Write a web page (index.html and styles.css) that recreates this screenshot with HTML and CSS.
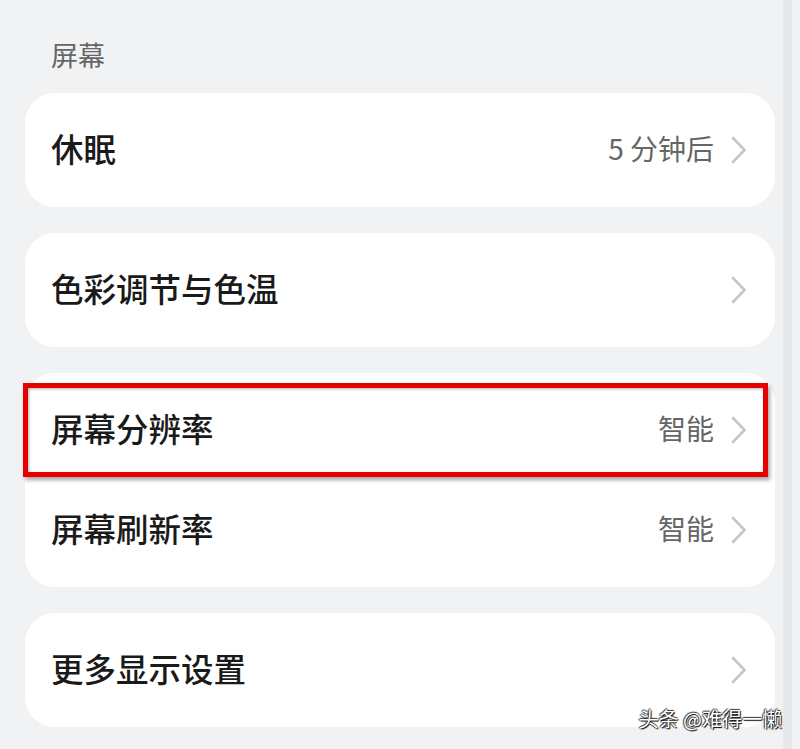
FILE: index.html
```html
<!DOCTYPE html>
<html lang="zh-CN">
<head>
  <meta charset="UTF-8" />
  <meta name="viewport" content="width=device-width, initial-scale=1.0"/>
  <title>显示</title>
  <link rel="stylesheet" href="styles.css">
</head>
<body>

  <div class="screen">
    <div class="section-title">屏幕</div>

    <div class="card">
      <div class="row">
        <span class="label">休眠</span>
        <span class="value">5 分钟后</span>
        <svg class="chevron" viewBox="0 0 16 28"><path d="M2 2 L13.5 14 L2 26" /></svg>
      </div>
    </div>

    <div class="card">
      <div class="row">
        <span class="label">色彩调节与色温</span>
        <svg class="chevron" viewBox="0 0 16 28"><path d="M2 2 L13.5 14 L2 26" /></svg>
      </div>
    </div>

    <div class="card card-group">
      <div class="row">
        <span class="label">屏幕分辨率</span>
        <span class="value">智能</span>
        <svg class="chevron" viewBox="0 0 16 28"><path d="M2 2 L13.5 14 L2 26" /></svg>
      </div>
      <div class="row">
        <span class="label">屏幕刷新率</span>
        <span class="value">智能</span>
        <svg class="chevron" viewBox="0 0 16 28"><path d="M2 2 L13.5 14 L2 26" /></svg>
      </div>
      <!-- highlight mark drawn over the first row -->
      <div class="highlight"></div>
    </div>

    <div class="card">
      <div class="row">
        <span class="label">更多显示设置</span>
        <svg class="chevron" viewBox="0 0 16 28"><path d="M2 2 L13.5 14 L2 26" /></svg>
      </div>
    </div>

    <div class="watermark">头条 @难得一懒</div>
  </div>

  <div class="track"></div>

</body>
</html>
```

FILE: styles.css
```css
body {
  margin: 0;
  background: #f1f2f4;
  font-family: 'Noto Sans CJK SC', 'Noto Sans', sans-serif;
  display: flex;
  height: 749px;
  overflow: hidden;
}
.screen {
  position: relative;
  width: 783px;
  padding-left: 25px;
  padding-right: 8px;
  box-sizing: border-box;
}
.track {
  width: 9px;
  background: #e7e8ea;
}
.section-title {
  font-size: 27px;
  line-height: 36px;
  color: #666;
  padding: 37px 0 20px 26px;
}
.card {
  position: relative;
  background: #fff;
  border-radius: 30px;
  padding: 7px 0;
  margin-bottom: 26px;
}
.row {
  display: flex;
  align-items: center;
  height: 100px;
  box-sizing: border-box;
  padding: 0 28px 5px 26px;
}
.label {
  flex: 1;
  font-size: 32.5px;
  font-weight: 500;
  color: #1a1a1a;
}
.value {
  font-size: 28px;
  color: #666;
  margin-right: 17px;
}
.chevron {
  width: 16px;
  height: 28px;
  margin-top: 4px;
}
.chevron path {
  fill: none;
  stroke: #c6c6c6;
  stroke-width: 2.6;
  stroke-linecap: round;
  stroke-linejoin: round;
}
.highlight {
  position: absolute;
  left: -2px;
  right: 7px;
  top: 10px;
  height: 94px;
  box-sizing: border-box;
  border: 5px solid #e60000;
  box-shadow: 2px 3px 4px rgba(0, 0, 0, 0.35), inset 1px 1px 3px rgba(0, 0, 0, 0.3);
}
.watermark {
  position: absolute;
  right: 1px;
  bottom: 16px;
  font-size: 20px;
  color: #fff;
  text-shadow: 1px 1px 1px #000, -1px 0 1px #333, 0 -1px 1px #333;
}
```
